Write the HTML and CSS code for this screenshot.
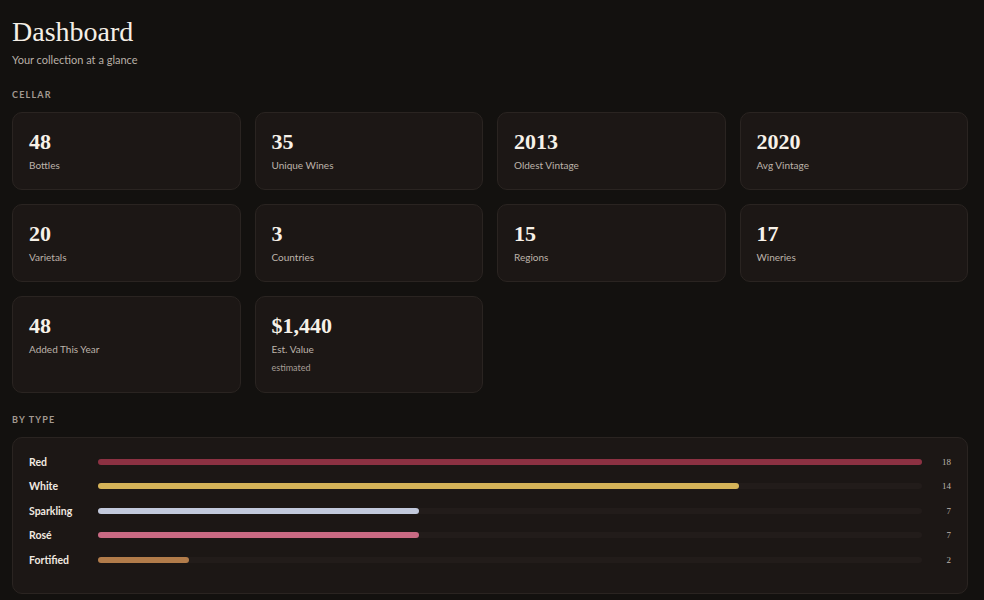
FILE: index.html
```html
<!DOCTYPE html>
<html lang="en">
<head>
<meta charset="UTF-8">
<meta name="viewport" content="width=device-width, initial-scale=1.0">
<title>Dashboard</title>
<link rel="stylesheet" href="styles.css">
</head>
<body>
    <div class="page">
        <h1 class="title">Dashboard</h1>
        <p class="subtitle">Your collection at a glance</p>

        <h2 class="section">Cellar</h2>
        <div class="stats">
            <div class="stat"><div class="stat-value">48</div><div class="stat-label">Bottles</div></div>
            <div class="stat"><div class="stat-value">35</div><div class="stat-label">Unique Wines</div></div>
            <div class="stat"><div class="stat-value">2013</div><div class="stat-label">Oldest Vintage</div></div>
            <div class="stat"><div class="stat-value">2020</div><div class="stat-label">Avg Vintage</div></div>
            <div class="stat"><div class="stat-value">20</div><div class="stat-label">Varietals</div></div>
            <div class="stat"><div class="stat-value">3</div><div class="stat-label">Countries</div></div>
            <div class="stat"><div class="stat-value">15</div><div class="stat-label">Regions</div></div>
            <div class="stat"><div class="stat-value">17</div><div class="stat-label">Wineries</div></div>
            <div class="stat"><div class="stat-value">48</div><div class="stat-label">Added This Year</div></div>
            <div class="stat">
                <div class="stat-value">$1,440</div>
                <div class="stat-label">Est. Value</div>
                <div class="stat-note">estimated</div>
            </div>
        </div>

        <h2 class="section">By Type</h2>
        <div class="panel">
            <div class="type-row">
                <span class="type-name">Red</span>
                <div class="track"><div class="fill red" style="width: 100%"></div></div>
                <span class="type-count">18</span>
            </div>
            <div class="type-row">
                <span class="type-name">White</span>
                <div class="track"><div class="fill white" style="width: 77.8%"></div></div>
                <span class="type-count">14</span>
            </div>
            <div class="type-row">
                <span class="type-name">Sparkling</span>
                <div class="track"><div class="fill sparkling" style="width: 38.9%"></div></div>
                <span class="type-count">7</span>
            </div>
            <div class="type-row">
                <span class="type-name">Rosé</span>
                <div class="track"><div class="fill rose" style="width: 38.9%"></div></div>
                <span class="type-count">7</span>
            </div>
            <div class="type-row">
                <span class="type-name">Fortified</span>
                <div class="track"><div class="fill fortified" style="width: 11.1%"></div></div>
                <span class="type-count">2</span>
            </div>
        </div>
    </div>
</body>
</html>
```

FILE: styles.css
```css
body {
    margin: 0;
    background: #13110f;
    color: #f2ece4;
    font-family: "Lato", "Liberation Sans", sans-serif;
}
.page {
    padding: 15px 16px 20px 12px;
}
.title {
    margin: 0;
    font-family: "Liberation Serif", serif;
    font-weight: normal;
    font-size: 28px;
    line-height: 34px;
    color: #f5efe6;
}
.subtitle {
    margin: 3px 0 0;
    font-size: 11px;
    line-height: 16px;
    color: #b9b0a7;
}
.section {
    margin: 21px 0 11px;
    font-size: 9px;
    line-height: 12px;
    font-weight: bold;
    letter-spacing: 1.2px;
    text-transform: uppercase;
    color: #a39a92;
}

/* stat cards */
.stats {
    display: grid;
    grid-template-columns: repeat(4, 1fr);
    gap: 14px;
}
.stat {
    background: #1c1715;
    border: 1px solid #2a2421;
    border-radius: 10px;
    padding: 16px 16px 17px;
}
.stat-value {
    font-family: "Liberation Serif", serif;
    font-weight: bold;
    font-size: 22px;
    line-height: 26px;
    color: #f7f1e8;
}
.stat-label {
    margin-top: 3px;
    font-size: 10px;
    line-height: 14px;
    color: #bcb3aa;
}
.stat-note {
    margin-top: 5px;
    font-size: 9px;
    line-height: 14px;
    color: #a69d95;
}

/* type breakdown */
.panel {
    background: #1c1715;
    border: 1px solid #2a2421;
    border-radius: 10px;
    padding: 17px 16px 26px;
    display: flex;
    flex-direction: column;
    gap: 10.4px;
}
.type-row {
    display: grid;
    grid-template-columns: 69px 1fr 29px;
    align-items: center;
    height: 14px;
}
.type-name {
    font-size: 10.5px;
    font-weight: bold;
    color: #f0e9e0;
}
.track {
    height: 6px;
    border-radius: 3px;
    background: #221c1a;
}
.fill {
    height: 100%;
    border-radius: 3px;
}
.fill.red { background: #8c3142; }
.fill.white { background: #d5b358; }
.fill.sparkling { background: #c2c9dc; }
.fill.rose { background: #c96a83; }
.fill.fortified { background: #b27c4a; }
.type-count {
    text-align: right;
    font-family: "Liberation Serif", serif;
    font-size: 9px;
    color: #bdb4ab;
}
```
